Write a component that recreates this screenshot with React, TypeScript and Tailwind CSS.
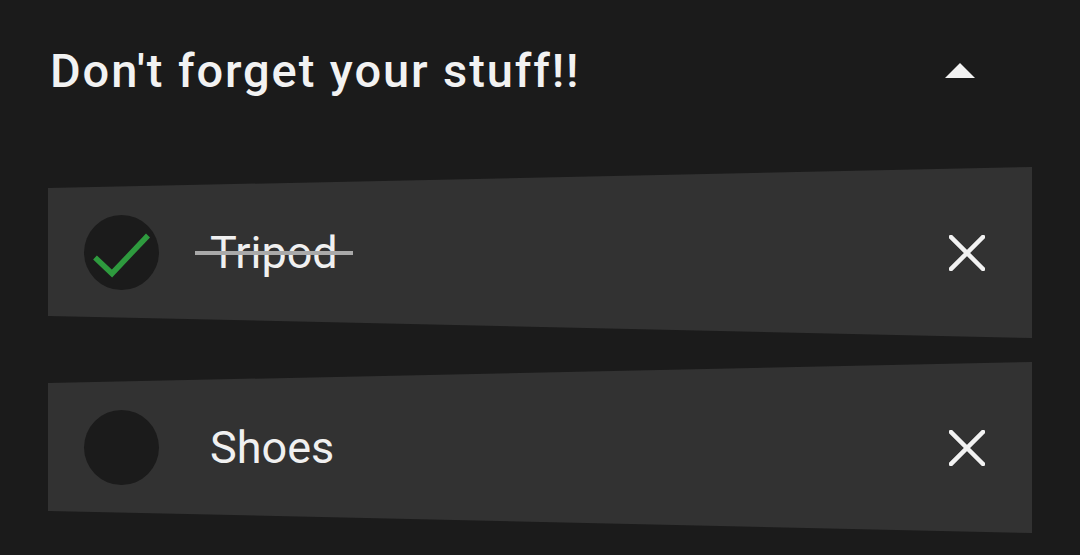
import React from "react"

const items = [
  { name: "Tripod", done: true },
  { name: "Shoes", done: false },
]

function CloseIcon() {
  return (
    <svg width="36" height="36" viewBox="0 0 36 36" fill="none">
      <path d="M2 2L34 34M34 2L2 34" stroke="#f2f2f2" strokeWidth="4.5" strokeLinecap="square" />
    </svg>
  )
}

export default function App() {
  return (
    <div className="min-h-[555px] bg-[#1b1b1b] px-12 font-['Roboto',sans-serif]">
      {/* Header */}
      <div className="flex h-[140px] items-center justify-between pl-[2px] pr-[57px]">
        <h1 className="text-[47px] leading-none font-medium tracking-[1.9px] text-[#f2f2f2]">
          Don't forget your stuff!!
        </h1>
        <svg width="30" height="15" viewBox="0 0 30 15">
          <polygon points="15,0 30,15 0,15" fill="#f2f2f2" />
        </svg>
      </div>

      {/* Items */}
      <div className="mt-[27px] flex flex-col gap-6">
        {items.map((item, i) => (
          <div
            key={i}
            className="flex h-[171px] items-center bg-[#323232] pl-9 pr-[47px] [clip-path:polygon(0_12.3%,100%_0,100%_100%,0_87.1%)]"
          >
            <div className="h-[75px] w-[75px] shrink-0 rounded-full bg-[#1b1b1b]">
              {item.done && (
                <svg width="75" height="75" viewBox="0 0 75 75">
                  <path d="M11 42.5L28 58.5L64 20.5" stroke="#2e9a3e" strokeWidth="5.5" fill="none" />
                </svg>
              )}
            </div>
            <div className="relative ml-[51px] flex-1">
              <span className="text-[45px] leading-none text-[#f0f0f0]">{item.name}</span>
              {item.done && (
                <div className="absolute top-1/2 left-[-15px] h-[4px] w-[158px] -translate-y-1/2 bg-[#a9a9a9]" />
              )}
            </div>
            <CloseIcon />
          </div>
        ))}
      </div>
    </div>
  )
}
